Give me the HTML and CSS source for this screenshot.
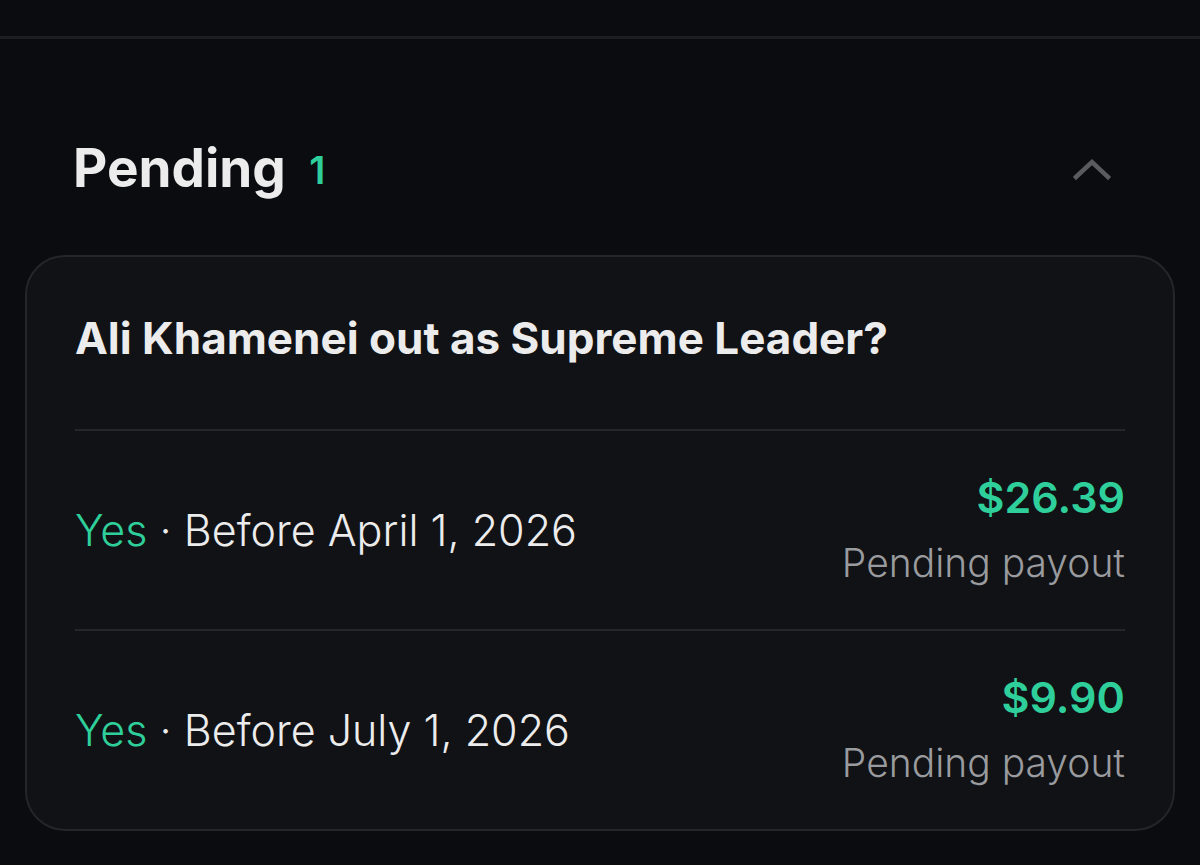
FILE: index.html
```html
<!DOCTYPE html>
<html lang="en">
<head>
<meta charset="utf-8">
<title>Pending</title>
<link rel="stylesheet" href="styles.css">
</head>
<body>
<div class="topbar"></div>
<section class="section">
  <header class="section-head">
    <h2 class="section-title">Pending <span class="count">1</span></h2>
    <svg class="chevron" width="38" height="24" viewBox="0 0 38 24" aria-hidden="true">
      <polyline points="3,20 19,5 35,20" fill="none" stroke="#5a5b5f" stroke-width="4.5" stroke-linecap="square"/>
    </svg>
  </header>
  <div class="card">
    <h3 class="card-title">Ali Khamenei out as Supreme Leader?</h3>
    <div class="row">
      <div class="row-label"><span class="yes">Yes</span> · Before April 1, 2026</div>
      <div class="row-value">
        <div class="amount">$26.39</div>
        <div class="sub">Pending payout</div>
      </div>
    </div>
    <div class="row">
      <div class="row-label"><span class="yes">Yes</span> · Before July 1, 2026</div>
      <div class="row-value">
        <div class="amount">$9.90</div>
        <div class="sub">Pending payout</div>
      </div>
    </div>
  </div>
</section>
</body>
</html>
```
FILE: styles.css
```css
html, body {
  margin: 0;
  padding: 0;
  background: #0b0c10;
  font-family: Inter, "Noto Sans", sans-serif;
  color: #ececed;
}
.topbar {
  height: 36px;
  border-bottom: 3px solid #1d1e22;
}
.section-head {
  display: flex;
  align-items: center;
  justify-content: space-between;
  padding: 100px 89px 56px 73px;
}
.section-title {
  margin: 0;
  font-size: 53px;
  line-height: 58px;
  font-weight: 700;
  letter-spacing: 0;
  color: #ececed;
}
.count {
  margin-left: 11px;
  font-size: 38px;
  font-weight: 600;
  color: #2fcf9b;
  vertical-align: 3px;
}
.chevron {
  display: block;
}
.card {
  margin: 0 25px;
  border: 2px solid #25262a;
  border-radius: 40px;
  background: #111215;
  padding: 0 48px;
}
.card-title {
  margin: 0;
  padding: 57px 0 67px;
  font-size: 44px;
  line-height: 48px;
  font-weight: 700;
  letter-spacing: 0;
  color: #ececed;
}
.row {
  display: flex;
  align-items: center;
  justify-content: space-between;
  height: 198px;
  border-top: 2px solid #26272b;
}
.row-label {
  font-size: 43px;
  font-weight: 300;
  color: #ececed;
}
.yes {
  color: #2fcf9b;
}
.row-value {
  text-align: right;
  margin-top: -4px;
}
.amount {
  font-size: 43px;
  line-height: 52px;
  font-weight: 600;
  color: #2fcf9b;
}
.sub {
  margin-top: 18px;
  font-size: 39px;
  line-height: 44px;
  font-weight: 300;
  color: #9a9b9f;
}
```
